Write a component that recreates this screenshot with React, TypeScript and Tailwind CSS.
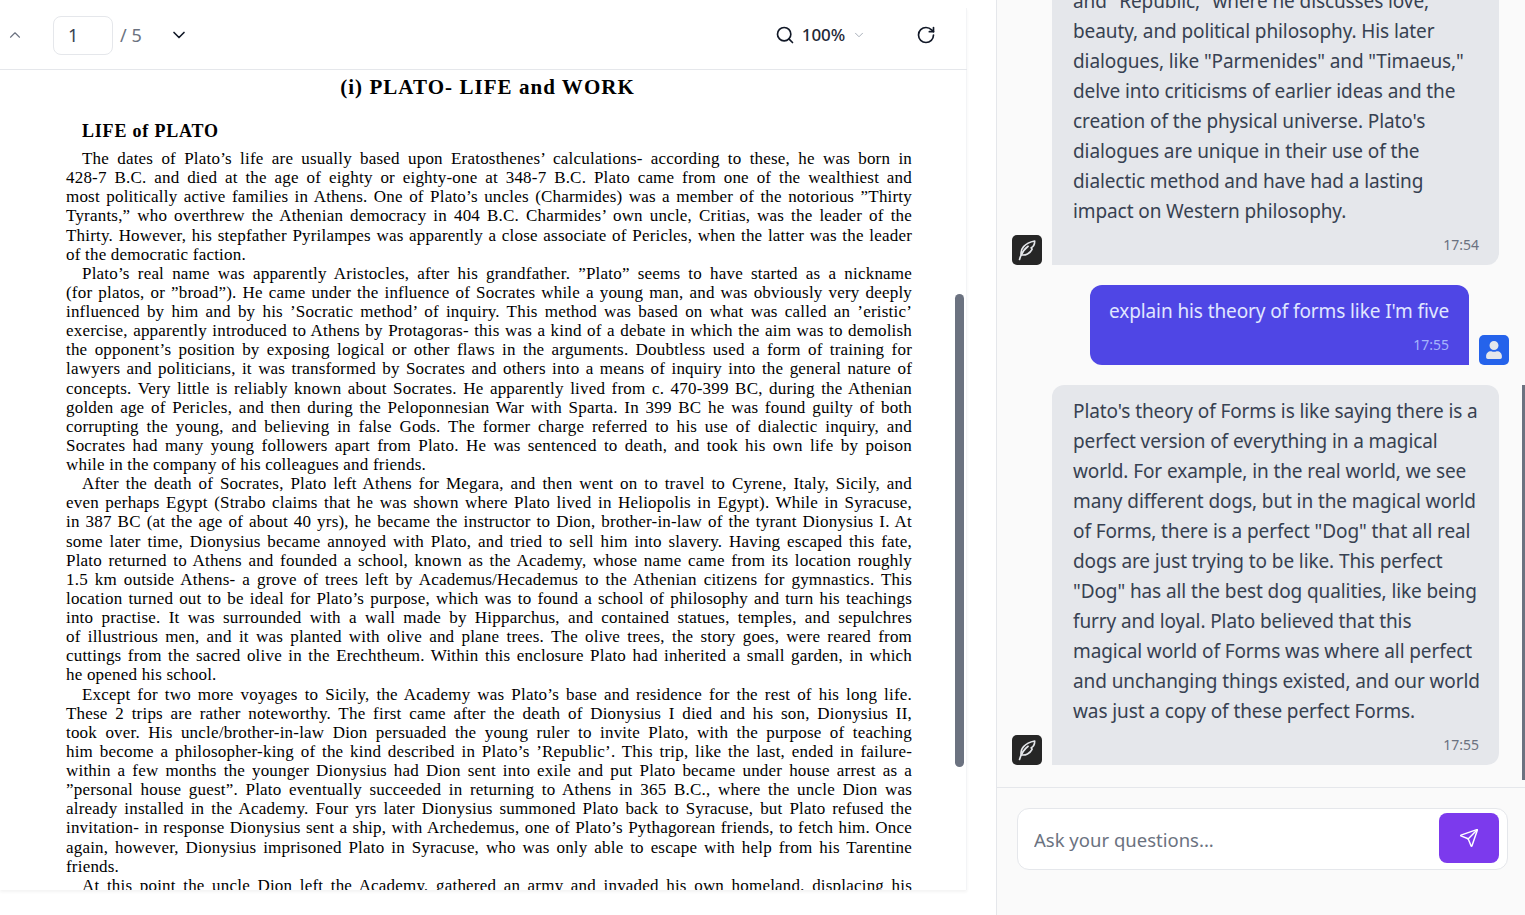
import { ChevronDown, ChevronUp, RotateCw, Search, Send } from "lucide-react";
import { FaUser } from "react-icons/fa";

// Lines of the PDF page, broken as in the document
const pdfLines = [
  { t: "The dates of Plato’s life are usually based upon Eratosthenes’ calculations- according to these, he was born in", i: true },
  { t: "428-7 B.C. and died at the age of eighty or eighty-one at 348-7 B.C. Plato came from one of the wealthiest and" },
  { t: "most politically active families in Athens. One of Plato’s uncles (Charmides) was a member of the notorious ”Thirty" },
  { t: "Tyrants,” who overthrew the Athenian democracy in 404 B.C. Charmides’ own uncle, Critias, was the leader of the" },
  { t: "Thirty. However, his stepfather Pyrilampes was apparently a close associate of Pericles, when the latter was the leader" },
  { t: "of the democratic faction.", end: true },
  { t: "Plato’s real name was apparently Aristocles, after his grandfather. ”Plato” seems to have started as a nickname", i: true },
  { t: "(for platos, or ”broad”). He came under the influence of Socrates while a young man, and was obviously very deeply" },
  { t: "influenced by him and by his ’Socratic method’ of inquiry. This method was based on what was called an ’eristic’" },
  { t: "exercise, apparently introduced to Athens by Protagoras- this was a kind of a debate in which the aim was to demolish" },
  { t: "the opponent’s position by exposing logical or other flaws in the arguments. Doubtless used a form of training for" },
  { t: "lawyers and politicians, it was transformed by Socrates and others into a means of inquiry into the general nature of" },
  { t: "concepts. Very little is reliably known about Socrates. He apparently lived from c. 470-399 BC, during the Athenian" },
  { t: "golden age of Pericles, and then during the Peloponnesian War with Sparta. In 399 BC he was found guilty of both" },
  { t: "corrupting the young, and believing in false Gods. The former charge referred to his use of dialectic inquiry, and" },
  { t: "Socrates had many young followers apart from Plato. He was sentenced to death, and took his own life by poison" },
  { t: "while in the company of his colleagues and friends.", end: true },
  { t: "After the death of Socrates, Plato left Athens for Megara, and then went on to travel to Cyrene, Italy, Sicily, and", i: true },
  { t: "even perhaps Egypt (Strabo claims that he was shown where Plato lived in Heliopolis in Egypt). While in Syracuse," },
  { t: "in 387 BC (at the age of about 40 yrs), he became the instructor to Dion, brother-in-law of the tyrant Dionysius I. At" },
  { t: "some later time, Dionysius became annoyed with Plato, and tried to sell him into slavery. Having escaped this fate," },
  { t: "Plato returned to Athens and founded a school, known as the Academy, whose name came from its location roughly" },
  { t: "1.5 km outside Athens- a grove of trees left by Academus/Hecademus to the Athenian citizens for gymnastics. This" },
  { t: "location turned out to be ideal for Plato’s purpose, which was to found a school of philosophy and turn his teachings" },
  { t: "into practise. It was surrounded with a wall made by Hipparchus, and contained statues, temples, and sepulchres" },
  { t: "of illustrious men, and it was planted with olive and plane trees. The olive trees, the story goes, were reared from" },
  { t: "cuttings from the sacred olive in the Erechtheum. Within this enclosure Plato had inherited a small garden, in which" },
  { t: "he opened his school.", end: true },
  { t: "Except for two more voyages to Sicily, the Academy was Plato’s base and residence for the rest of his long life.", i: true },
  { t: "These 2 trips are rather noteworthy. The first came after the death of Dionysius I died and his son, Dionysius II," },
  { t: "took over. His uncle/brother-in-law Dion persuaded the young ruler to invite Plato, with the purpose of teaching" },
  { t: "him become a philosopher-king of the kind described in Plato’s ’Republic’. This trip, like the last, ended in failure-" },
  { t: "within a few months the younger Dionysius had Dion sent into exile and put Plato became under house arrest as a" },
  { t: "”personal house guest”. Plato eventually succeeded in returning to Athens in 365 B.C., where the uncle Dion was" },
  { t: "already installed in the Academy. Four yrs later Dionysius summoned Plato back to Syracuse, but Plato refused the" },
  { t: "invitation- in response Dionysius sent a ship, with Archedemus, one of Plato’s Pythagorean friends, to fetch him. Once" },
  { t: "again, however, Dionysius imprisoned Plato in Syracuse, who was only able to escape with help from his Tarentine" },
  { t: "friends.", end: true },
  { t: "At this point the uncle Dion left the Academy, gathered an army and invaded his own homeland, displacing his", i: true },
];

const firstAnswer = [
  "and \"Republic,\" where he discusses love,",
  "beauty, and political philosophy. His later",
  "dialogues, like \"Parmenides\" and \"Timaeus,\"",
  "delve into criticisms of earlier ideas and the",
  "creation of the physical universe. Plato's",
  "dialogues are unique in their use of the",
  "dialectic method and have had a lasting",
  "impact on Western philosophy.",
];

const secondAnswer = [
  "Plato's theory of Forms is like saying there is a",
  "perfect version of everything in a magical",
  "world. For example, in the real world, we see",
  "many different dogs, but in the magical world",
  "of Forms, there is a perfect \"Dog\" that all real",
  "dogs are just trying to be like. This perfect",
  "\"Dog\" has all the best dog qualities, like being",
  "furry and loyal. Plato believed that this",
  "magical world of Forms was where all perfect",
  "and unchanging things existed, and our world",
  "was just a copy of these perfect Forms.",
];

const QuillAvatar = () => (
  <div className="w-[30px] h-[30px] shrink-0 rounded-[5px] bg-[#262626] flex items-center justify-center">
    <svg width="22" height="22" viewBox="0 0 20 20" fill="none" stroke="#e5e7eb" strokeWidth="1.5" strokeLinecap="round" strokeLinejoin="round">
      <path d="M3.2 18.6C4.6 13.6 7 9.6 11 6.6" />
      <path d="M4.8 14.4C3.6 9.5 7.5 3.6 17 1.8C17 5.2 15.8 7 13.8 8C14.4 8.6 14.6 9 14.6 9.4C12.8 13 8.6 15.2 4.8 14.4Z" />
    </svg>
  </div>
);

const AiMessage = ({ lines, time }: { lines: string[]; time: string }) => (
  <div className="flex items-end gap-[10px]">
    <QuillAvatar />
    <div className="w-[447px] bg-[#e5e7eb] rounded-xl rounded-bl-none pl-[21px] pr-5 pt-[11px] pb-[10px] text-[#374151]">
      {lines.map((line) => (
        <p key={line} className="text-[19px] tracking-[-0.1px] leading-[30px] whitespace-nowrap">
          {line}
        </p>
      ))}
      <div className="mt-[9px] text-sm leading-5 text-right text-[#6b7280]">{time}</div>
    </div>
  </div>
);

const App = () => {
  return (
    <div className="relative w-[1525px] h-[915px] overflow-hidden flex bg-white font-['Noto_Sans',sans-serif]">
      {/* PDF viewer */}
      <div className="w-[996px] shrink-0 pt-2 pr-[29px]">
        <div className="relative h-[882px] flex flex-col border-r border-[#f3f4f6] shadow-[0_2px_3px_rgba(0,0,0,0.05)]">
          <div className="h-[62px] shrink-0 -mr-px border-b border-[#e5e7eb] flex items-center pb-[7px] relative">
            <ChevronUp className="w-[18px] h-[18px] ml-[6px] text-[#6b7280]" strokeWidth={1.5} />
            <div className="ml-[29px] w-[60px] h-[39px] rounded-lg border border-[#e5e7eb] flex items-center pl-[14px] text-lg text-[#374151]">
              1
            </div>
            <span className="ml-[7px] text-lg text-[#6b7280]">/ 5</span>
            <ChevronDown className="ml-[27px] w-5 h-5 text-[#111827]" strokeWidth={2} />
            <Search className="ml-[586px] w-[20px] h-[20px] text-[#111827]" strokeWidth={2} />
            <span className="ml-[7px] text-[17px] font-medium text-[#1f2937]">100%</span>
            <ChevronDown className="ml-[7px] w-[14px] h-[14px] text-[#9ca3af]" strokeWidth={1.5} />
            <RotateCw className="ml-[50px] w-5 h-5 text-[#111827]" strokeWidth={2} />
          </div>

          {/* Page */}
          <div className="flex-1 overflow-hidden pl-[66px] pr-[54px] text-black font-['Liberation_Serif',serif]">
            <h1 className="mt-[3px] pr-[3px] text-center text-[21px] leading-7 font-bold tracking-[1.05px]">
              (i) PLATO- LIFE and WORK
            </h1>
            <h2 className="mt-[18px] ml-4 text-[18px] leading-6 font-bold tracking-[0.8px]">LIFE of PLATO</h2>
            <div className="mt-[6px]">
              {pdfLines.map((line) => (
                <div
                  key={line.t}
                  className={`text-[17px] tracking-[0.2px] leading-[19.13px] whitespace-nowrap ${line.i ? "pl-4" : ""} ${line.end ? "" : "text-justify [text-align-last:justify]"}`}
                >
                  {line.t}
                </div>
              ))}
            </div>
          </div>

          {/* PDF scrollbar thumb */}
          <div className="absolute left-[955px] top-[286px] w-[9px] h-[473px] rounded-full bg-[#6b7280]" />
        </div>
      </div>

      {/* Chat */}
      <div className="flex-1 flex flex-col bg-[#fafafa] border-l border-[#e5e7eb]">
        <div className="h-[788px] shrink-0 overflow-hidden flex flex-col justify-end gap-5 pl-[15px] pr-4 pb-[22px] border-b border-[#e5e7eb]">
          <AiMessage lines={firstAnswer} time="17:54" />
          <div className="flex items-end justify-end gap-[10px]">
            <div className="bg-[#4f46e5] rounded-xl rounded-br-none pl-[19px] pr-5 pt-[11px] pb-[10px]">
              <p className="text-[19px] tracking-[-0.1px] leading-[30px] whitespace-nowrap text-[#e0e7ff]">explain his theory of forms like I'm five</p>
              <div className="mt-[9px] text-sm leading-5 text-right text-[#a5b4fc]">17:55</div>
            </div>
            <div className="w-[30px] h-[30px] shrink-0 rounded-[5px] bg-[#2563eb] flex items-center justify-center">
              <FaUser className="w-[18px] h-[18px] text-[#e5e7eb]" />
            </div>
          </div>
          <AiMessage lines={secondAnswer} time="17:55" />
        </div>

        <div className="pt-5 pl-5 pr-[17px]">
          <div className="h-[62px] rounded-xl border border-[#e5e7eb] bg-white flex items-center pl-4 pr-2">
            <input
              readOnly
              placeholder="Ask your questions..."
              className="flex-1 min-w-0 pt-[2px] bg-transparent outline-none text-[18.5px] placeholder:text-[#6b7280]"
            />
            <div className="w-[60px] h-[50px] mb-[2px] rounded-lg bg-[#7c3aed] flex items-center justify-center">
              <Send className="w-5 h-5 text-white" strokeWidth={1.75} />
            </div>
          </div>
        </div>
      </div>

      {/* Chat scrollbar thumb */}
      <div className="absolute left-[1522px] top-[385px] w-[3px] h-[395px] bg-[#6b7280]" />
    </div>
  );
};

export default App;
